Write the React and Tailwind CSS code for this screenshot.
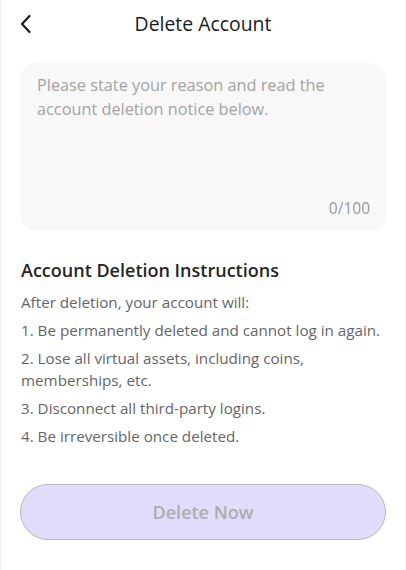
import React, { useState } from 'react';

const NOTICE = [
  'After deletion, your account will:',
  '1. Be permanently deleted and cannot log in again.',
  '2. Lose all virtual assets, including coins, memberships, etc.',
  '3. Disconnect all third-party logins.',
  '4. Be irreversible once deleted.',
];

const BackIcon = () => (
  <svg width="14" height="22" viewBox="0 0 14 22" fill="none">
    <path d="M10.5 3L3 11l7.5 8" stroke="#1a1a1a" strokeWidth="2.2" strokeLinecap="round" strokeLinejoin="round" />
  </svg>
);

const App = () => {
  const [reason, setReason] = useState('');

  return (
    <div className="min-h-[570px] w-[406px] bg-white border-x border-[#f0f0f0] font-['Open_Sans',sans-serif]">
      {/* header */}
      <header className="relative h-[47px] flex items-center justify-center">
        <button className="absolute left-[18px] top-[13px] p-0">
          <BackIcon />
        </button>
        <h1 className="text-[19.4px] text-[#1a1a1a]">Delete Account</h1>
      </header>

      {/* reason box */}
      <div className="mx-[19px] mt-[16px] h-[168px] rounded-[16px] bg-[#f8f8f8] px-[17px] pt-[10px] pb-[11px] flex flex-col">
        <textarea
          value={reason}
          onChange={(e) => setReason(e.target.value.slice(0, 100))}
          placeholder="Please state your reason and read the account deletion notice below."
          className="flex-1 resize-none bg-transparent outline-none text-[16.3px] leading-[24px] text-[#333] placeholder:text-[#a3a3a3]"
        />
        <div className="text-right text-[15.5px] text-[#999] -mr-[1px]">{reason.length}/100</div>
      </div>

      {/* instructions */}
      <section className="px-[20px] mt-[27px]">
        <h2 className="text-[18px] font-semibold text-[#262626] leading-[24px]">Account Deletion Instructions</h2>
        <div className="mt-[9px] flex flex-col gap-[6px] text-[15.2px] leading-[22px] text-[#666]">
          {NOTICE.map((line) => (
            <p key={line}>{line}</p>
          ))}
        </div>
      </section>

      {/* action */}
      <div className="px-[19px] mt-[37px]">
        <button className="w-full h-[56px] rounded-full bg-[#e0dcfc] border border-[#b8b8b8] text-[18px] font-semibold text-[#adadad]">
          Delete Now
        </button>
      </div>
    </div>
  );
};

export default App;
